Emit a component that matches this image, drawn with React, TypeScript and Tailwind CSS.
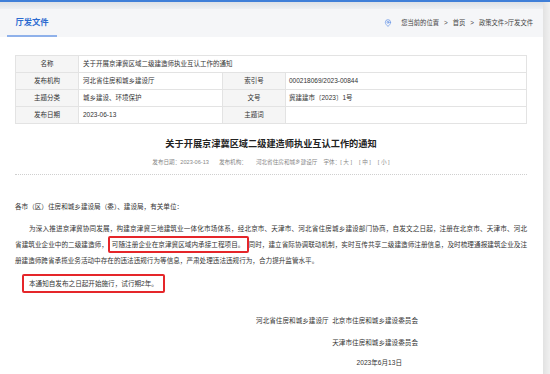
import { MapPin } from "lucide-react";

const rows = [
  { a: "发布机构", b: "河北省住房和城乡建设厅", c: "索引号", d: "000218069/2023-00844" },
  { a: "主题分类", b: "城乡建设、环境保护", c: "文号", d: "冀建建市〔2023〕1号" },
  { a: "发布日期", b: "2023-06-13", c: "主题词", d: "" },
];

export default function App() {
  return (
    <div className="w-[550px] h-[374px] overflow-hidden bg-[#ececec] font-['Liberation_Sans','Noto_Sans_CJK_SC',sans-serif] text-[#333]">
      <div className="h-[2px] bg-[#3f7fd8]" />
      <div className="flex h-[372px]">
        <div className="w-[543px] bg-white flex flex-col">
          <div className="h-[7px] bg-gradient-to-b from-[#dde1e6] to-[#eef0f3]" />

          {/* 头部 */}
          <div className="h-[28px] bg-[#f5f6f8] flex items-end justify-between pl-[7px] pr-[10px]">
            <div className="w-[50px] h-full flex items-center justify-center border-b-2 border-[#8fb1ea]">
              <span className="text-[8.3px] font-bold text-[#2c6bd0]">厅发文件</span>
            </div>
            <div className="h-full flex items-center gap-[5px] text-[6.3px] text-[#444]">
              <MapPin size={8} strokeWidth={2} className="text-[#5a8de6] mr-[4px]" />
              <span>您当前的位置</span>
              <span>&gt;</span>
              <span>首页</span>
              <span>&gt;</span>
              <span>政策文件&gt;厅发文件</span>
            </div>
          </div>

          <div className="pl-[15px] pr-[16px] flex flex-col">
            {/* 信息表 */}
            <table className="mt-[18px] w-[511px] border-collapse text-[6.5px] table-fixed">
              <colgroup>
                <col className="w-[63px]" />
                <col className="w-[144px]" />
                <col className="w-[63px]" />
                <col className="w-[241px]" />
              </colgroup>
              <tbody>
                <tr className="h-[17px]">
                  <td className="border border-[#e3e3e3] bg-[#f5f5f5] text-center">名称</td>
                  <td colSpan={3} className="border border-[#e3e3e3] px-[4px]">
                    关于开展京津冀区域二级建造师执业互认工作的通知
                  </td>
                </tr>
                {rows.map((r) => (
                  <tr key={r.a} className="h-[17px]">
                    <td className="border border-[#e3e3e3] bg-[#f5f5f5] text-center">{r.a}</td>
                    <td className="border border-[#e3e3e3] px-[4px]">{r.b}</td>
                    <td className="border border-[#e3e3e3] bg-[#f5f5f5] text-center">{r.c}</td>
                    <td className="border border-[#e3e3e3] px-[3px]">{r.d}</td>
                  </tr>
                ))}
              </tbody>
            </table>

            {/* 标题 */}
            <h1 className="mt-[14px] leading-[12px] text-center text-[9.2px] font-bold text-[#222]">
              关于开展京津冀区域二级建造师执业互认工作的通知
            </h1>
            <div className="mt-[6px] leading-[12px] flex justify-center text-[5.6px] text-[#888]">
              <span>发布日期：2023-06-13</span>
              <span className="ml-[10px]">发布机构：</span>
              <span className="ml-[9px]">河北省住房和城乡建设厅</span>
              <span className="ml-[6px]">字体：[ 大 ]</span>
              <span className="ml-[7px]">[ 中 ]</span>
              <span className="ml-[7px]">[ 小 ]</span>
            </div>
            <div className="mt-[6px] border-t border-dotted border-[#cfcfcf]" />

            {/* 正文 */}
            <div className="mt-[24px] text-[6.6px] leading-[16px]">
              <p>各市（区）住房和城乡建设局（委）、建设局，有关单位：</p>
              <div className="mt-[6px] text-justify [text-align-last:justify]">
                <p className="indent-[14px]">
                  为深入推进京津冀协同发展，构建京津冀三地建筑业一体化市场体系，经北京市、天津市、河北省住房城乡建设部门协商，自发文之日起，注册在北京市、天津市、河北
                </p>
                <p className="whitespace-nowrap">
                  省建筑业企业中的二级建造师，
                  <span className="border-2 border-[#e5262a] rounded-[2px] px-[2px] py-[3px]">
                    可随注册企业在京津冀区域内承接工程项目。
                  </span>
                  同时，建立省际协调联动机制，实时互传共享二级建造师注册信息，及时梳理通报建筑企业及注
                </p>
                <p className="[text-align-last:left]">
                  册建造师跨省承揽业务活动中存在的违法违规行为等信息，严肃处理违法违规行为，合力提升监管水平。
                </p>
              </div>
              <div className="mt-[5px]">
                <div className="inline-block ml-[7px] border-2 border-[#e5262a] rounded-[2px] px-[5px] py-[1px] leading-[13px]">
                  本通知自发布之日起开始施行，试行期2年。
                </div>
              </div>

              {/* 落款 */}
              <div className="mt-[20px] pr-[109px] flex flex-col items-end">
                <p>河北省住房和城乡建设厅&nbsp;&nbsp;北京市住房和城乡建设委员会</p>
                <p className="mt-[6px]">天津市住房和城乡建设委员会</p>
                <p className="mt-[4px] mr-[16px]">2023年6月13日</p>
              </div>
            </div>
          </div>
        </div>
        <div className="w-[7px] bg-gradient-to-r from-[#e2e2e2] to-[#f0f0f0]" />
      </div>
    </div>
  );
}
